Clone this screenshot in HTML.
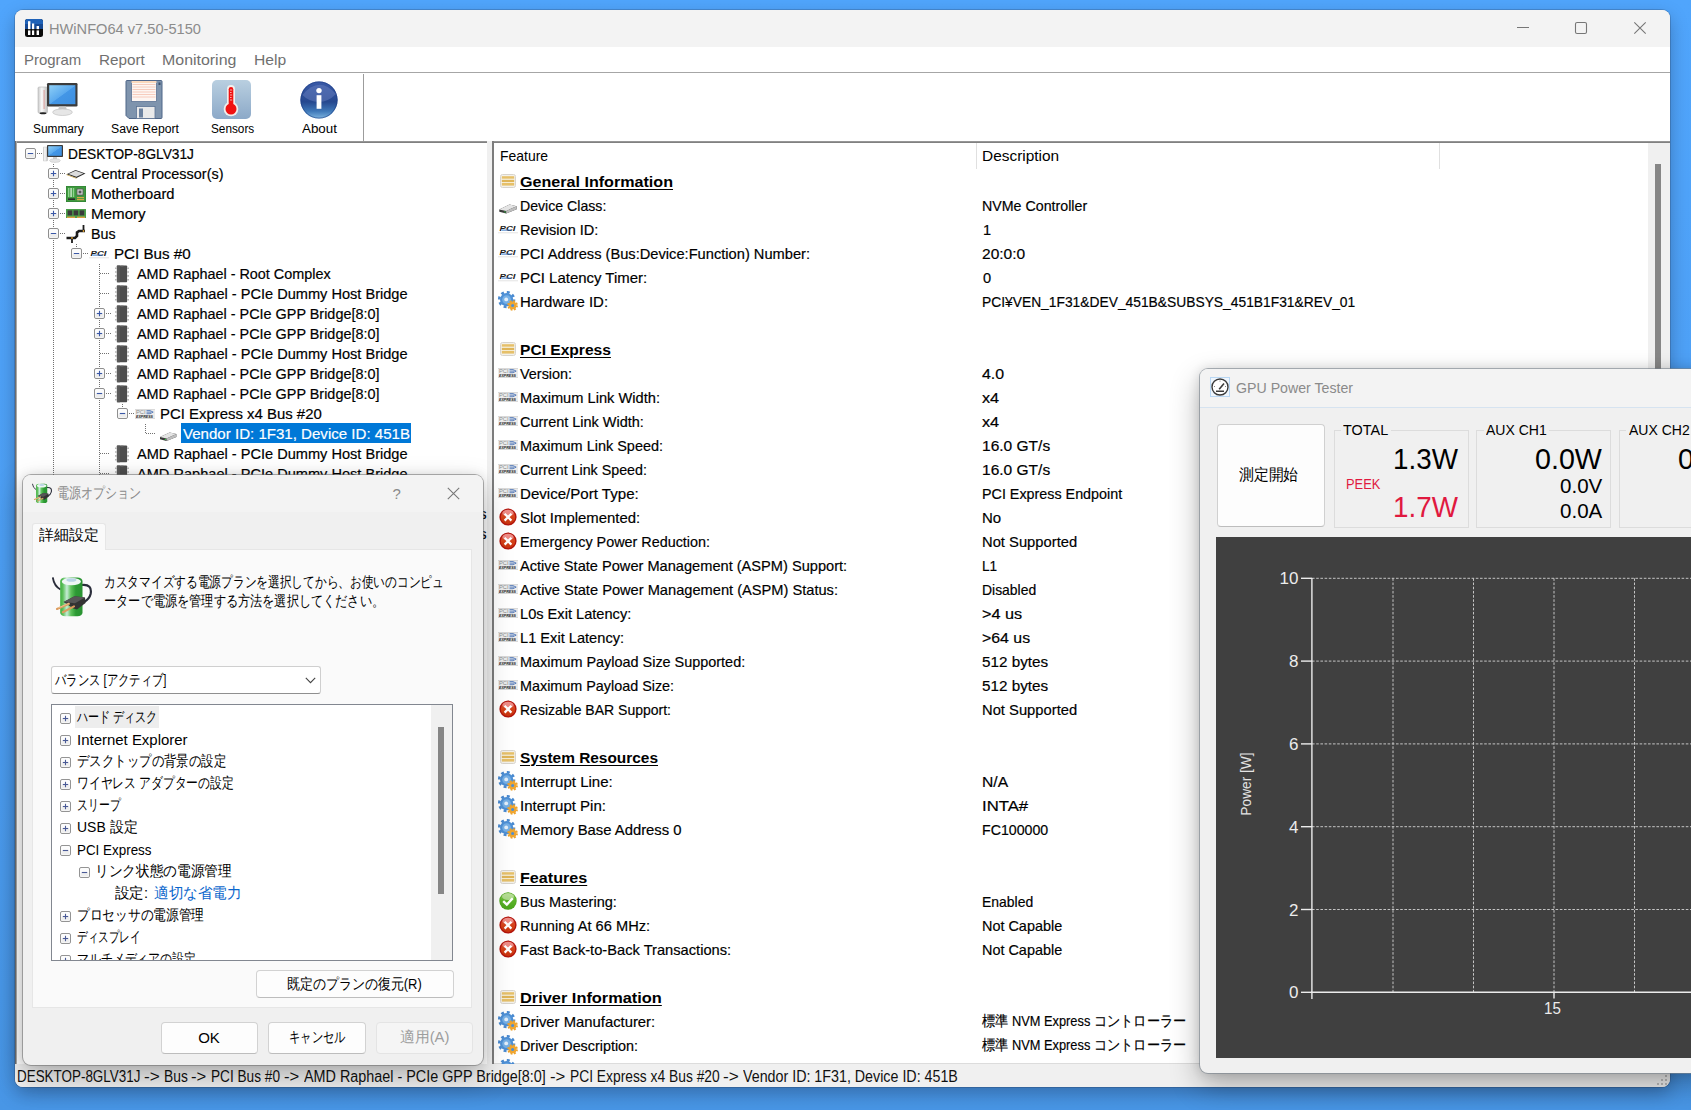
<!DOCTYPE html><html><head><meta charset="utf-8"><title>HWiNFO64</title><style>
html,body{margin:0;padding:0}
body{width:1691px;height:1110px;overflow:hidden;position:relative;background:linear-gradient(180deg,#50a5fc 0%,#4d9ff4 50%,#4896e6 100%);font-family:"Liberation Sans", sans-serif;}
div,svg{position:absolute;box-sizing:border-box}
.t{white-space:pre;}
.k{-webkit-text-stroke:.18px currentColor}
</style></head><body>
<svg width="0" height="0" style="position:absolute"><defs>
<linearGradient id="gScr" x1="0" y1="0" x2="1" y2="1"><stop offset="0" stop-color="#8fd0f7"/><stop offset=".5" stop-color="#5aa9ee"/><stop offset=".52" stop-color="#4396e6"/><stop offset="1" stop-color="#3d8fe0"/></linearGradient>
<linearGradient id="gTow" x1="0" y1="0" x2="1" y2="0"><stop offset="0" stop-color="#c9c9c9"/><stop offset=".4" stop-color="#fafafa"/><stop offset="1" stop-color="#bdbdbd"/></linearGradient>
<linearGradient id="gRed" x1="0" y1="0" x2="0" y2="1"><stop offset="0" stop-color="#e2574a"/><stop offset=".5" stop-color="#d6441a"/><stop offset="1" stop-color="#c8330f"/></linearGradient>
<linearGradient id="gGrn" x1="0" y1="0" x2="0" y2="1"><stop offset="0" stop-color="#9ad06a"/><stop offset=".45" stop-color="#5db52a"/><stop offset="1" stop-color="#4aa51c"/></linearGradient>
<linearGradient id="gAbt" x1="0" y1="0" x2="0" y2="1"><stop offset="0" stop-color="#3a5aa8"/><stop offset=".55" stop-color="#26488f"/><stop offset=".8" stop-color="#3f78b8"/><stop offset="1" stop-color="#7fb6e0"/></linearGradient>
<linearGradient id="gSen" x1="0" y1="0" x2="0" y2="1"><stop offset="0" stop-color="#b9cfe0"/><stop offset="1" stop-color="#8ca9c8"/></linearGradient>
<linearGradient id="gDrv" x1="0" y1="0" x2="1" y2="0"><stop offset="0" stop-color="#e8e8e8"/><stop offset="1" stop-color="#bcbcbc"/></linearGradient>
<linearGradient id="gBat2" x1="0" y1="0" x2="1" y2="0"><stop offset="0" stop-color="#3fae3f"/><stop offset=".12" stop-color="#5cc05a"/><stop offset=".3" stop-color="#c6ecd6"/><stop offset=".48" stop-color="#5fc35c"/><stop offset=".7" stop-color="#2c9a34"/><stop offset="1" stop-color="#2a9232"/></linearGradient>
<linearGradient id="gBat" x1="0" y1="0" x2="1" y2="0"><stop offset="0" stop-color="#3f9a35"/><stop offset=".4" stop-color="#8fdc78"/><stop offset="1" stop-color="#2f8a2a"/></linearGradient>

<symbol id="i-x" viewBox="0 0 18 18"><circle cx="9" cy="9" r="8.6" fill="#b3150c"/><circle cx="9" cy="9" r="7.2" fill="url(#gRed)"/><ellipse cx="9" cy="5" rx="5.6" ry="3.2" fill="#f3a0a0" opacity=".75"/><path d="M5.6 5.8 L12.4 12.6 M12.4 5.8 L5.6 12.6" stroke="#fff" stroke-width="2.3" stroke-linecap="butt"/></symbol>
<symbol id="i-ok" viewBox="0 0 18 18"><circle cx="9" cy="9" r="8.7" fill="#4ea51f"/><circle cx="9" cy="9" r="8" fill="url(#gGrn)"/><ellipse cx="9" cy="4.6" rx="6" ry="3.4" fill="#c7e6ae" opacity=".7"/><path d="M4.2 9.2 L7.8 12.6 L13.8 6.2" stroke="#fff" stroke-width="2.4" fill="none"/></symbol>
<symbol id="i-gear" viewBox="0 0 20 20"><circle cx="8.6" cy="8.6" r="7.4" fill="none" stroke="#4a8ad0" stroke-width="2.6" stroke-dasharray="2.9 2.91"/><circle cx="8.6" cy="8.6" r="6.6" fill="#4e90d6"/><circle cx="8.6" cy="8.6" r="4.4" fill="#76b0e6"/><circle cx="8.2" cy="8.4" r="1.9" fill="#e4effa"/><circle cx="14.6" cy="14.4" r="4.4" fill="none" stroke="#eea22c" stroke-width="1.8" stroke-dasharray="1.9 1.56"/><circle cx="14.6" cy="14.4" r="3.9" fill="#f0a630"/><circle cx="14.6" cy="14.4" r="1.5" fill="#4e90d6"/></symbol>
<symbol id="i-list" viewBox="0 0 16 14"><rect x=".5" y=".5" width="15" height="13" rx="2" fill="#f3f1ec" stroke="#d8d4cc"/><rect x="1.8" y="2.2" width="12.4" height="2.6" fill="#e6c069"/><rect x="1.8" y="5.7" width="12.4" height="2.4" fill="#dfb558"/><rect x="1.8" y="9" width="12.4" height="2.6" fill="#e6c069"/><rect x="1.8" y="4.8" width="12.4" height=".9" fill="#f6ecd0"/><rect x="1.8" y="8.1" width="12.4" height=".9" fill="#f6ecd0"/></symbol>
<symbol id="i-drive" viewBox="0 0 18 10"><path d="M0.3 5.4 L10.5 0.6 L17.7 2.2 L17.7 5.2 L7.2 9.6 L0.3 7.8 Z" fill="#3a3a3a"/><path d="M0.3 5.4 L10.5 0.6 L17.7 2.2 L7.2 6.9 Z" fill="#e4e4e4"/><path d="M7.2 6.9 L17.7 2.2 L17.7 5.2 L7.2 9.6 Z" fill="#bdbdbd"/><circle cx="6" cy="7.9" r=".7" fill="#35d048"/></symbol>
<symbol id="i-pci" viewBox="0 0 20 10"><rect x="0" y="8.3" width="20" height="1" fill="#e3e3e3"/><text x="1.5" y="7" font-family="Liberation Sans, sans-serif" font-size="7.5" font-weight="700" font-style="italic" fill="#1c1c1c" textLength="16" lengthAdjust="spacingAndGlyphs">PCI</text><rect x="4" y="5.6" width="9" height="1" fill="#3a78c8"/></symbol>
<symbol id="i-pcie" viewBox="0 0 20 10"><rect x="0" y="0" width="20" height="10" fill="#ececec"/><rect x="0" y="0" width="20" height=".7" fill="#d2d2d2"/><rect x="0" y="9.3" width="20" height=".7" fill="#d2d2d2"/><text x="1" y="5" font-family="Liberation Sans, sans-serif" font-size="5.2" fill="#8a8a8a" textLength="9.5" lengthAdjust="spacingAndGlyphs">PCI</text><path d="M11.5 1.6 H15 L18.2 3.1 L15 4.7 H11.5 M11.5 3.15 H16" stroke="#3b67b0" stroke-width=".8" fill="none"/><text x="1" y="8.7" font-family="Liberation Sans, sans-serif" font-size="3.9" font-weight="700" font-style="italic" fill="#222" textLength="17" lengthAdjust="spacingAndGlyphs">EXPRESS</text></symbol>
<symbol id="i-chip" viewBox="0 0 18 20"><rect x="4.9" y="1.5" width="10.2" height="16.8" rx=".8" fill="#4d4d4d"/><rect x="4.9" y="1.5" width="3" height="16.8" fill="#5a5a5a"/><path d="M8.5 1.5 h3 v.9 h-3z" fill="#777"/><path d="M3 4.2h1.9M3 8h1.9M3 11.9h1.9M3 15.7h1.9M15.1 4.2h1.9M15.1 8h1.9M15.1 11.9h1.9M15.1 15.7h1.9" stroke="#b8b8b8" stroke-width="1.6"/></symbol>
<symbol id="i-pc" viewBox="0 0 20 18"><rect x="0" y="2" width="4.6" height="14" rx=".8" fill="url(#gTow)" stroke="#bdbdbd" stroke-width=".4"/><rect x="4" y="0" width="16" height="12" rx=".8" fill="#3a3a3a"/><rect x="5.2" y="1.2" width="13.6" height="9.6" fill="url(#gScr)"/><rect x="10" y="12" width="4" height="2.2" fill="#cfcfcf"/><ellipse cx="12" cy="15.6" rx="5.4" ry="1.9" fill="#e4e4e4" stroke="#b8b8b8" stroke-width=".4"/></symbol>
<symbol id="i-cpu" viewBox="0 0 20 10"><path d="M0.5 5.2 L9.5 1 L19.5 4.6 L10.5 9 Z" fill="#2e2e2e"/><path d="M2.5 5 L9.6 1.8 L17.4 4.6 L10.4 7.8 Z" fill="#dcdcdc"/><path d="M0.5 5.2 L10.5 9 L10.5 9.8 L0.5 6 Z" fill="#c9a44a"/></symbol>
<symbol id="i-mb" viewBox="0 0 20 16"><rect x="0" y="0" width="20" height="16" fill="#3f9a3f"/><rect x="0" y="0" width="20" height="16" fill="none" stroke="#2c7a30" stroke-width="1"/><rect x="11" y="3" width="6" height="6" fill="#d8d8d8" stroke="#555" stroke-width=".8"/><rect x="12.6" y="4.6" width="2.8" height="2.8" fill="#555"/><rect x="2" y="2" width="1.4" height="9" fill="#8fd48f"/><rect x="4.4" y="2" width="1.4" height="9" fill="#cfeacf"/><rect x="6.8" y="2" width="1.4" height="9" fill="#8fd48f"/><rect x="2" y="12.4" width="7" height="1.6" fill="#2a2a2a"/><rect x="11" y="11" width="7" height="1.2" fill="#d9a648"/><rect x="11" y="13" width="7" height="1.2" fill="#d9a648"/></symbol>
<symbol id="i-mem" viewBox="0 0 20 10"><rect x="0" y="0" width="20" height="9" fill="#4aa04a"/><rect x="1.6" y="1.4" width="4.6" height="5" fill="#3a3a3a"/><rect x="7.6" y="1.4" width="4.6" height="5" fill="#3a3a3a"/><rect x="13.6" y="1.4" width="4.6" height="5" fill="#3a3a3a"/><rect x="1" y="7.6" width="8" height="1.4" fill="#d9a040"/><rect x="11" y="7.6" width="8" height="1.4" fill="#d9a040"/></symbol>
<symbol id="i-bus" viewBox="0 0 20 20"><path d="M0.5 14 H9 L11 12 V8.5 L13 7 H19" stroke="#1c1c1c" stroke-width="2.6" fill="none"/><path d="M17.5 1 V7.5 M6 14 V19" stroke="#1c1c1c" stroke-width="1.8" fill="none"/><circle cx="6" cy="14" r=".9" fill="#e0a030"/><circle cx="17.5" cy="7" r=".9" fill="#e0a030"/></symbol>
</defs></svg>
<div style="left:15px;top:10px;width:1655px;height:1077px;border-radius:8px;overflow:hidden;background:#f0f0f0;box-shadow:0 7px 18px rgba(0,0,20,.27),0 0 0 1px rgba(50,80,120,.3);"><div style="left:0px;top:0px;width:1655px;height:37px;background:#f3f3f3"></div><svg style="left:10px;top:9px;" width="18" height="18" viewBox="0 0 18 18"><rect x="0" y="0" width="18" height="18" rx="2.5" fill="#0a0a0a"/><rect x="0" y="0" width="18" height="9" rx="2.5" fill="#1f62b8"/><rect x="0" y="5" width="18" height="5" fill="#174a94"/><rect x="3" y="2.2" width="2.4" height="8" fill="#fff"/><rect x="7" y="4.5" width="2.2" height="5.7" fill="#fff"/><rect x="11.6" y="7" width="2.4" height="3.2" fill="#fff"/><rect x="3" y="11.4" width="2.4" height="4.6" fill="#fff"/><rect x="7" y="11.4" width="2.2" height="4.6" fill="#fff"/><rect x="11.6" y="11.4" width="2.4" height="4.6" fill="#fff"/></svg><div class="t" style="left:33.77px;top:9.8px;font-size:15px;line-height:17px;color:#8c8c8c;transform:scaleX(0.9743);transform-origin:0 0;">HWiNFO64 v7.50-5150</div><svg style="left:1495px;top:8px;" width="150" height="20" viewBox="0 0 150 20"><path d="M7 9.5 H19" stroke="#767676" stroke-width="1.1" fill="none"/><rect x="65.5" y="4.5" width="11" height="11" rx="1.6" stroke="#767676" stroke-width="1.1" fill="none"/><path d="M124.3 4.3 L135.7 15.7 M135.7 4.3 L124.3 15.7" stroke="#767676" stroke-width="1.1" fill="none"/></svg><div style="left:0px;top:37px;width:1655px;height:94px;background:#fff"></div><div class="t" style="left:8.78px;top:40.6px;font-size:15px;line-height:17px;color:#707070;transform:scaleX(0.996);transform-origin:0 0;">Program</div><div class="t" style="left:83.77px;top:40.6px;font-size:15px;line-height:17px;color:#707070;transform:scaleX(1.0171);transform-origin:0 0;">Report</div><div class="t" style="left:146.67px;top:40.6px;font-size:15px;line-height:17px;color:#707070;transform:scaleX(1.0621);transform-origin:0 0;">Monitoring</div><div class="t" style="left:238.78px;top:40.6px;font-size:15px;line-height:17px;color:#707070;transform:scaleX(1.0434);transform-origin:0 0;">Help</div><div style="left:0px;top:62px;width:1655px;height:1px;background:#a6a6a6"></div><div style="left:348px;top:64px;width:1px;height:67px;background:#9c9c9c"></div><svg style="left:22px;top:72px;" width="42" height="36" viewBox="0 0 42 36"><rect x="1" y="5" width="9.5" height="26" rx="1.2" fill="url(#gTow)" stroke="#b5b5b5" stroke-width=".6"/><rect x="6.7" y="8" width=".7" height="19" fill="#d8605a" opacity=".75"/><ellipse cx="6" cy="31.2" rx="3.4" ry="1" fill="#222"/><rect x="10" y="1" width="30.5" height="23.5" rx="1.2" fill="#3b3b3b"/><rect x="12.2" y="3.2" width="26.2" height="19" fill="url(#gScr)"/><path d="M22 24.5 h7 l1 4 h-9z" fill="#c9c9c9"/><ellipse cx="25.5" cy="30.2" rx="9.8" ry="3.3" fill="#e6e6e6" stroke="#b9b9b9" stroke-width=".6"/></svg><div class="t" style="left:17.58px;top:111.8px;font-size:12px;line-height:14px;color:#000;transform:scaleX(0.9886);transform-origin:0 0;">Summary</div><svg style="left:110px;top:70px;" width="38" height="39" viewBox="0 0 38 39"><path d="M1 1.5 Q1 .5 2 .5 H36 Q37 .5 37 1.5 V37.5 Q37 38.5 36 38.5 H4 L1 35.5 Z" fill="#7f94ad" stroke="#4f6688" stroke-width="1"/><rect x="6.5" y="1" width="25" height="20.5" fill="#fdf6f2" stroke="#5c7394" stroke-width=".8"/><path d="M7.5 4.5h23M7.5 7h23M7.5 9.5h23M7.5 12h23M7.5 14.5h23M7.5 17h23" stroke="#f5c2ae" stroke-width=".8"/><rect x="6.5" y="1" width="25" height="2" fill="#fbd9bd"/><rect x="11.5" y="26.5" width="18.5" height="12" fill="#eaeaea" stroke="#5c7394" stroke-width=".8"/><rect x="14" y="28.5" width="4" height="9" fill="#6c829f"/><rect x="33.5" y="2.5" width="2" height="2.5" fill="#3e5270"/></svg><div class="t" style="left:95.58px;top:111.8px;font-size:12px;line-height:14px;color:#000;transform:scaleX(1.0188);transform-origin:0 0;">Save Report</div><svg style="left:197px;top:70px;" width="39" height="39" viewBox="0 0 39 39"><rect x="0" y="0" width="39" height="39" rx="5" fill="url(#gSen)"/><rect x="15" y="5" width="8" height="24" rx="4" fill="#f1efec"/><circle cx="19" cy="29" r="7.3" fill="#f1efec"/><rect x="16.7" y="7" width="4.6" height="22" rx="2.3" fill="#f01010"/><circle cx="19" cy="29" r="5.5" fill="#f01010"/><path d="M18 10h2.2M18 12.5h1.6M18 15h2.2M18 17.5h1.6M18 20h2.2" stroke="#fbd0d0" stroke-width=".8"/></svg><div class="t" style="left:195.58px;top:111.8px;font-size:12px;line-height:14px;color:#000;transform:scaleX(0.9825);transform-origin:0 0;">Sensors</div><svg style="left:285px;top:71px;" width="38" height="38" viewBox="0 0 38 38"><circle cx="19" cy="19" r="18.6" fill="url(#gAbt)"/><circle cx="19" cy="19" r="18.1" fill="none" stroke="#1f3f86" stroke-width="1" opacity=".6"/><path d="M2.5 14 Q19 -6 36 13 Q28 21 19 21 Q9 21 2.5 14Z" fill="#6f86c4" opacity=".45"/><circle cx="19" cy="9.6" r="2.7" fill="#fff"/><rect x="16.6" y="14.2" width="4.8" height="13.6" fill="#fff"/></svg><div class="t" style="left:286.98px;top:111.8px;font-size:12px;line-height:14px;color:#000;transform:scaleX(1.1148);transform-origin:0 0;">About</div><div style="left:0px;top:131px;width:472px;height:923px;background:#fff"></div><div style="left:0px;top:131px;width:472px;height:2px;background:linear-gradient(#a0a0a0,#767676)"></div><div style="left:0px;top:131px;width:1px;height:923px;background:#6e6e6e"></div><div style="left:1px;top:131px;width:1px;height:923px;background:#a8a8a8"></div><div style="left:472px;top:131px;width:5px;height:923px;background:#f0f0f0"></div><div style="left:38px;top:154px;width:1px;height:900px;background:repeating-linear-gradient(180deg,#707070 0,#707070 1px,transparent 1px,transparent 2px)"></div><div style="left:61px;top:234px;width:1px;height:5px;background:repeating-linear-gradient(180deg,#707070 0,#707070 1px,transparent 1px,transparent 2px)"></div><div style="left:84px;top:254px;width:1px;height:800px;background:repeating-linear-gradient(180deg,#707070 0,#707070 1px,transparent 1px,transparent 2px)"></div><div style="left:107px;top:394px;width:1px;height:5px;background:repeating-linear-gradient(180deg,#707070 0,#707070 1px,transparent 1px,transparent 2px)"></div><div style="left:130px;top:414px;width:1px;height:10px;background:repeating-linear-gradient(180deg,#707070 0,#707070 1px,transparent 1px,transparent 2px)"></div><div style="left:21.5px;top:143px;width:5.5px;height:1px;background:repeating-linear-gradient(90deg,#707070 0,#707070 1px,transparent 1px,transparent 2px)"></div><svg style="left:10px;top:138px;" width="11" height="11" viewBox="0 0 11 11"><rect x=".5" y=".5" width="10" height="10" rx="1.5" fill="#fbfbfb" stroke="#8f8f8f"/><rect x="1.5" y="6" width="8" height="3.5" fill="#ececec"/><path d="M2.8 5.5 H8.2" stroke="#3a57a6" stroke-width="1.1"/></svg><svg style="left:28px;top:134.5px" width="20" height="18"><use href="#i-pc"/></svg><div class="t k" style="left:52.69px;top:135.7px;font-size:14.7px;line-height:16px;color:#000;transform:scaleX(0.9334);transform-origin:0 0;">DESKTOP-8GLV31J</div><div style="left:44.5px;top:163px;width:5.5px;height:1px;background:repeating-linear-gradient(90deg,#707070 0,#707070 1px,transparent 1px,transparent 2px)"></div><svg style="left:33px;top:158px;" width="11" height="11" viewBox="0 0 11 11"><rect x=".5" y=".5" width="10" height="10" rx="1.5" fill="#fbfbfb" stroke="#8f8f8f"/><rect x="1.5" y="6" width="8" height="3.5" fill="#ececec"/><path d="M2.8 5.5 H8.2" stroke="#3a57a6" stroke-width="1.1"/><path d="M5.5 2.8 V8.2" stroke="#3a57a6" stroke-width="1.1"/></svg><svg style="left:51px;top:158.5px" width="20" height="10"><use href="#i-cpu"/></svg><div class="t k" style="left:75.69px;top:155.7px;font-size:14.7px;line-height:16px;color:#000;transform:scaleX(0.9837);transform-origin:0 0;">Central Processor(s)</div><div style="left:44.5px;top:183px;width:5.5px;height:1px;background:repeating-linear-gradient(90deg,#707070 0,#707070 1px,transparent 1px,transparent 2px)"></div><svg style="left:33px;top:178px;" width="11" height="11" viewBox="0 0 11 11"><rect x=".5" y=".5" width="10" height="10" rx="1.5" fill="#fbfbfb" stroke="#8f8f8f"/><rect x="1.5" y="6" width="8" height="3.5" fill="#ececec"/><path d="M2.8 5.5 H8.2" stroke="#3a57a6" stroke-width="1.1"/><path d="M5.5 2.8 V8.2" stroke="#3a57a6" stroke-width="1.1"/></svg><svg style="left:51px;top:175.5px" width="20" height="16"><use href="#i-mb"/></svg><div class="t k" style="left:75.69px;top:175.7px;font-size:14.7px;line-height:16px;color:#000;transform:scaleX(1.0023);transform-origin:0 0;">Motherboard</div><div style="left:44.5px;top:203px;width:5.5px;height:1px;background:repeating-linear-gradient(90deg,#707070 0,#707070 1px,transparent 1px,transparent 2px)"></div><svg style="left:33px;top:198px;" width="11" height="11" viewBox="0 0 11 11"><rect x=".5" y=".5" width="10" height="10" rx="1.5" fill="#fbfbfb" stroke="#8f8f8f"/><rect x="1.5" y="6" width="8" height="3.5" fill="#ececec"/><path d="M2.8 5.5 H8.2" stroke="#3a57a6" stroke-width="1.1"/><path d="M5.5 2.8 V8.2" stroke="#3a57a6" stroke-width="1.1"/></svg><svg style="left:51px;top:198.5px" width="20" height="10"><use href="#i-mem"/></svg><div class="t k" style="left:75.69px;top:195.7px;font-size:14.7px;line-height:16px;color:#000;transform:scaleX(1.0307);transform-origin:0 0;">Memory</div><div style="left:44.5px;top:223px;width:5.5px;height:1px;background:repeating-linear-gradient(90deg,#707070 0,#707070 1px,transparent 1px,transparent 2px)"></div><svg style="left:33px;top:218px;" width="11" height="11" viewBox="0 0 11 11"><rect x=".5" y=".5" width="10" height="10" rx="1.5" fill="#fbfbfb" stroke="#8f8f8f"/><rect x="1.5" y="6" width="8" height="3.5" fill="#ececec"/><path d="M2.8 5.5 H8.2" stroke="#3a57a6" stroke-width="1.1"/></svg><svg style="left:51px;top:213.5px" width="20" height="20"><use href="#i-bus"/></svg><div class="t k" style="left:75.69px;top:215.7px;font-size:14.7px;line-height:16px;color:#000;transform:scaleX(0.9709);transform-origin:0 0;">Bus</div><div style="left:67.5px;top:243px;width:5.5px;height:1px;background:repeating-linear-gradient(90deg,#707070 0,#707070 1px,transparent 1px,transparent 2px)"></div><svg style="left:56px;top:238px;" width="11" height="11" viewBox="0 0 11 11"><rect x=".5" y=".5" width="10" height="10" rx="1.5" fill="#fbfbfb" stroke="#8f8f8f"/><rect x="1.5" y="6" width="8" height="3.5" fill="#ececec"/><path d="M2.8 5.5 H8.2" stroke="#3a57a6" stroke-width="1.1"/></svg><svg style="left:74px;top:238.5px" width="20" height="10"><use href="#i-pci"/></svg><div class="t k" style="left:98.69px;top:235.7px;font-size:14.7px;line-height:16px;color:#000;transform:scaleX(1.032);transform-origin:0 0;">PCI Bus #0</div><div style="left:84.5px;top:263px;width:10.5px;height:1px;background:repeating-linear-gradient(90deg,#707070 0,#707070 1px,transparent 1px,transparent 2px)"></div><svg style="left:97px;top:253.5px" width="18" height="20"><use href="#i-chip"/></svg><div class="t k" style="left:121.69px;top:255.7px;font-size:14.7px;line-height:16px;color:#000;transform:scaleX(0.9804);transform-origin:0 0;">AMD Raphael - Root Complex</div><div style="left:84.5px;top:283px;width:10.5px;height:1px;background:repeating-linear-gradient(90deg,#707070 0,#707070 1px,transparent 1px,transparent 2px)"></div><svg style="left:97px;top:273.5px" width="18" height="20"><use href="#i-chip"/></svg><div class="t k" style="left:121.69px;top:275.7px;font-size:14.7px;line-height:16px;color:#000;transform:scaleX(0.9925);transform-origin:0 0;">AMD Raphael - PCIe Dummy Host Bridge</div><div style="left:90.5px;top:303px;width:5.5px;height:1px;background:repeating-linear-gradient(90deg,#707070 0,#707070 1px,transparent 1px,transparent 2px)"></div><svg style="left:79px;top:298px;" width="11" height="11" viewBox="0 0 11 11"><rect x=".5" y=".5" width="10" height="10" rx="1.5" fill="#fbfbfb" stroke="#8f8f8f"/><rect x="1.5" y="6" width="8" height="3.5" fill="#ececec"/><path d="M2.8 5.5 H8.2" stroke="#3a57a6" stroke-width="1.1"/><path d="M5.5 2.8 V8.2" stroke="#3a57a6" stroke-width="1.1"/></svg><svg style="left:97px;top:293.5px" width="18" height="20"><use href="#i-chip"/></svg><div class="t k" style="left:121.69px;top:295.7px;font-size:14.7px;line-height:16px;color:#000;transform:scaleX(0.9813);transform-origin:0 0;">AMD Raphael - PCIe GPP Bridge[8:0]</div><div style="left:90.5px;top:323px;width:5.5px;height:1px;background:repeating-linear-gradient(90deg,#707070 0,#707070 1px,transparent 1px,transparent 2px)"></div><svg style="left:79px;top:318px;" width="11" height="11" viewBox="0 0 11 11"><rect x=".5" y=".5" width="10" height="10" rx="1.5" fill="#fbfbfb" stroke="#8f8f8f"/><rect x="1.5" y="6" width="8" height="3.5" fill="#ececec"/><path d="M2.8 5.5 H8.2" stroke="#3a57a6" stroke-width="1.1"/><path d="M5.5 2.8 V8.2" stroke="#3a57a6" stroke-width="1.1"/></svg><svg style="left:97px;top:313.5px" width="18" height="20"><use href="#i-chip"/></svg><div class="t k" style="left:121.69px;top:315.7px;font-size:14.7px;line-height:16px;color:#000;transform:scaleX(0.9813);transform-origin:0 0;">AMD Raphael - PCIe GPP Bridge[8:0]</div><div style="left:84.5px;top:343px;width:10.5px;height:1px;background:repeating-linear-gradient(90deg,#707070 0,#707070 1px,transparent 1px,transparent 2px)"></div><svg style="left:97px;top:333.5px" width="18" height="20"><use href="#i-chip"/></svg><div class="t k" style="left:121.69px;top:335.7px;font-size:14.7px;line-height:16px;color:#000;transform:scaleX(0.9925);transform-origin:0 0;">AMD Raphael - PCIe Dummy Host Bridge</div><div style="left:90.5px;top:363px;width:5.5px;height:1px;background:repeating-linear-gradient(90deg,#707070 0,#707070 1px,transparent 1px,transparent 2px)"></div><svg style="left:79px;top:358px;" width="11" height="11" viewBox="0 0 11 11"><rect x=".5" y=".5" width="10" height="10" rx="1.5" fill="#fbfbfb" stroke="#8f8f8f"/><rect x="1.5" y="6" width="8" height="3.5" fill="#ececec"/><path d="M2.8 5.5 H8.2" stroke="#3a57a6" stroke-width="1.1"/><path d="M5.5 2.8 V8.2" stroke="#3a57a6" stroke-width="1.1"/></svg><svg style="left:97px;top:353.5px" width="18" height="20"><use href="#i-chip"/></svg><div class="t k" style="left:121.69px;top:355.7px;font-size:14.7px;line-height:16px;color:#000;transform:scaleX(0.9813);transform-origin:0 0;">AMD Raphael - PCIe GPP Bridge[8:0]</div><div style="left:90.5px;top:383px;width:5.5px;height:1px;background:repeating-linear-gradient(90deg,#707070 0,#707070 1px,transparent 1px,transparent 2px)"></div><svg style="left:79px;top:378px;" width="11" height="11" viewBox="0 0 11 11"><rect x=".5" y=".5" width="10" height="10" rx="1.5" fill="#fbfbfb" stroke="#8f8f8f"/><rect x="1.5" y="6" width="8" height="3.5" fill="#ececec"/><path d="M2.8 5.5 H8.2" stroke="#3a57a6" stroke-width="1.1"/></svg><svg style="left:97px;top:373.5px" width="18" height="20"><use href="#i-chip"/></svg><div class="t k" style="left:121.69px;top:375.7px;font-size:14.7px;line-height:16px;color:#000;transform:scaleX(0.9813);transform-origin:0 0;">AMD Raphael - PCIe GPP Bridge[8:0]</div><div style="left:113.5px;top:403px;width:5.5px;height:1px;background:repeating-linear-gradient(90deg,#707070 0,#707070 1px,transparent 1px,transparent 2px)"></div><svg style="left:102px;top:398px;" width="11" height="11" viewBox="0 0 11 11"><rect x=".5" y=".5" width="10" height="10" rx="1.5" fill="#fbfbfb" stroke="#8f8f8f"/><rect x="1.5" y="6" width="8" height="3.5" fill="#ececec"/><path d="M2.8 5.5 H8.2" stroke="#3a57a6" stroke-width="1.1"/></svg><svg style="left:120px;top:398.5px" width="20" height="10"><use href="#i-pcie"/></svg><div class="t k" style="left:144.69px;top:395.7px;font-size:14.7px;line-height:16px;color:#000;transform:scaleX(1.0162);transform-origin:0 0;">PCI Express x4 Bus #20</div><div style="left:166px;top:413px;width:230px;height:19.5px;background:#0078d7"></div><div style="left:130.5px;top:423px;width:10.5px;height:1px;background:repeating-linear-gradient(90deg,#707070 0,#707070 1px,transparent 1px,transparent 2px)"></div><svg style="left:143.8px;top:422.3px" width="18.4" height="9.4"><use href="#i-drive"/></svg><div class="t k" style="left:167.69px;top:415.7px;font-size:14.7px;line-height:16px;color:#fff;transform:scaleX(1.0259);transform-origin:0 0;">Vendor ID: 1F31, Device ID: 451B</div><div style="left:84.5px;top:443px;width:10.5px;height:1px;background:repeating-linear-gradient(90deg,#707070 0,#707070 1px,transparent 1px,transparent 2px)"></div><svg style="left:97px;top:433.5px" width="18" height="20"><use href="#i-chip"/></svg><div class="t k" style="left:121.69px;top:435.7px;font-size:14.7px;line-height:16px;color:#000;transform:scaleX(0.9925);transform-origin:0 0;">AMD Raphael - PCIe Dummy Host Bridge</div><div style="left:84.5px;top:463px;width:10.5px;height:1px;background:repeating-linear-gradient(90deg,#707070 0,#707070 1px,transparent 1px,transparent 2px)"></div><svg style="left:97px;top:453.5px" width="18" height="20"><use href="#i-chip"/></svg><div class="t k" style="left:121.69px;top:455.7px;font-size:14.7px;line-height:16px;color:#000;transform:scaleX(0.9925);transform-origin:0 0;">AMD Raphael - PCIe Dummy Host Bridge</div><div style="left:84.5px;top:483px;width:10.5px;height:1px;background:repeating-linear-gradient(90deg,#707070 0,#707070 1px,transparent 1px,transparent 2px)"></div><svg style="left:97px;top:473.5px" width="18" height="20"><use href="#i-chip"/></svg><div class="t k" style="left:121.69px;top:475.7px;font-size:14.7px;line-height:16px;color:#000;transform:scaleX(0.9925);transform-origin:0 0;">AMD Raphael - PCIe Dummy Host Bridge</div><div class="t k" style="left:464.3px;top:495.7px;font-size:14.7px;line-height:16px;color:#000;">s</div><div class="t k" style="left:464.3px;top:515.7px;font-size:14.7px;line-height:16px;color:#000;">s</div><div style="left:472px;top:464px;width:5px;height:126px;background:#f0f0f0"></div><div style="left:477px;top:131px;width:1178px;height:923px;background:#fff"></div><div style="left:477px;top:131px;width:1178px;height:2px;background:linear-gradient(#a0a0a0,#767676)"></div><div style="left:477px;top:131px;width:2px;height:923px;background:#7c7c7c"></div><div style="left:961px;top:133px;width:1px;height:26px;background:#e0e0e0"></div><div style="left:1424px;top:133px;width:1px;height:26px;background:#e0e0e0"></div><div class="t" style="left:484.99px;top:138.4px;font-size:14.6px;line-height:16px;color:#000;transform:scaleX(0.9557);transform-origin:0 0;">Feature</div><div class="t" style="left:967.49px;top:138.4px;font-size:14.6px;line-height:16px;color:#000;transform:scaleX(1.0571);transform-origin:0 0;">Description</div><div style="left:1633px;top:133px;width:22px;height:921px;background:#f0f0f0"></div><div style="left:1640px;top:154px;width:6px;height:596px;background:#868686"></div><div style="left:479px;top:1053px;width:1176px;height:1px;background:#dcdcdc"></div><svg style="left:485px;top:164px" width="16" height="14"><use href="#i-list"/></svg><div class="t" style="left:504.51px;top:163.5px;font-size:14px;line-height:16px;color:#000;font-weight:700;transform:scaleX(1.1503);transform-origin:0 0;text-decoration:underline;text-decoration-thickness:1px;text-underline-offset:2px;">General Information</div><svg style="left:484px;top:194.3px" width="18" height="10"><use href="#i-drive"/></svg><div class="t k" style="left:504.99px;top:188px;font-size:14.6px;line-height:16px;color:#000;transform:scaleX(0.968);transform-origin:0 0;">Device Class:</div><div class="t k" style="left:967.49px;top:188px;font-size:14.6px;line-height:16px;color:#000;transform:scaleX(0.9749);transform-origin:0 0;">NVMe Controller</div><svg style="left:483px;top:214px" width="20" height="10"><use href="#i-pci"/></svg><div class="t k" style="left:504.99px;top:212px;font-size:14.6px;line-height:16px;color:#000;transform:scaleX(0.9961);transform-origin:0 0;">Revision ID:</div><div class="t k" style="left:968px;top:212px;font-size:14.6px;line-height:16px;color:#000;">1</div><svg style="left:483px;top:238px" width="20" height="10"><use href="#i-pci"/></svg><div class="t k" style="left:504.99px;top:236px;font-size:14.6px;line-height:16px;color:#000;transform:scaleX(1.0046);transform-origin:0 0;">PCI Address (Bus:Device:Function) Number:</div><div class="t k" style="left:967.49px;top:236px;font-size:14.6px;line-height:16px;color:#000;transform:scaleX(1.0638);transform-origin:0 0;">20:0:0</div><svg style="left:483px;top:262px" width="20" height="10"><use href="#i-pci"/></svg><div class="t k" style="left:504.99px;top:260px;font-size:14.6px;line-height:16px;color:#000;transform:scaleX(1.0248);transform-origin:0 0;">PCI Latency Timer:</div><div class="t k" style="left:968px;top:260px;font-size:14.6px;line-height:16px;color:#000;">0</div><svg style="left:483px;top:281px" width="20" height="20"><use href="#i-gear"/></svg><div class="t k" style="left:504.99px;top:284px;font-size:14.6px;line-height:16px;color:#000;transform:scaleX(1.0244);transform-origin:0 0;">Hardware ID:</div><div class="t k" style="left:967.49px;top:284px;font-size:14.6px;line-height:16px;color:#000;transform:scaleX(0.9465);transform-origin:0 0;">PCI¥VEN_1F31&amp;DEV_451B&amp;SUBSYS_451B1F31&amp;REV_01</div><svg style="left:485px;top:332px" width="16" height="14"><use href="#i-list"/></svg><div class="t" style="left:504.51px;top:331.5px;font-size:14px;line-height:16px;color:#000;font-weight:700;transform:scaleX(1.1126);transform-origin:0 0;text-decoration:underline;text-decoration-thickness:1px;text-underline-offset:2px;">PCI Express</div><svg style="left:483px;top:358px" width="20" height="10"><use href="#i-pcie"/></svg><div class="t k" style="left:504.99px;top:356px;font-size:14.6px;line-height:16px;color:#000;transform:scaleX(0.9874);transform-origin:0 0;">Version:</div><div class="t k" style="left:967.49px;top:356px;font-size:14.6px;line-height:16px;color:#000;transform:scaleX(1.0922);transform-origin:0 0;">4.0</div><svg style="left:483px;top:382px" width="20" height="10"><use href="#i-pcie"/></svg><div class="t k" style="left:504.99px;top:380px;font-size:14.6px;line-height:16px;color:#000;transform:scaleX(1.0035);transform-origin:0 0;">Maximum Link Width:</div><div class="t k" style="left:967.49px;top:380px;font-size:14.6px;line-height:16px;color:#000;transform:scaleX(1.1132);transform-origin:0 0;">x4</div><svg style="left:483px;top:406px" width="20" height="10"><use href="#i-pcie"/></svg><div class="t k" style="left:504.99px;top:404px;font-size:14.6px;line-height:16px;color:#000;transform:scaleX(0.9917);transform-origin:0 0;">Current Link Width:</div><div class="t k" style="left:967.49px;top:404px;font-size:14.6px;line-height:16px;color:#000;transform:scaleX(1.1132);transform-origin:0 0;">x4</div><svg style="left:483px;top:430px" width="20" height="10"><use href="#i-pcie"/></svg><div class="t k" style="left:504.99px;top:428px;font-size:14.6px;line-height:16px;color:#000;transform:scaleX(0.9908);transform-origin:0 0;">Maximum Link Speed:</div><div class="t k" style="left:967.49px;top:428px;font-size:14.6px;line-height:16px;color:#000;transform:scaleX(1.0638);transform-origin:0 0;">16.0 GT/s</div><svg style="left:483px;top:454px" width="20" height="10"><use href="#i-pcie"/></svg><div class="t k" style="left:504.99px;top:452px;font-size:14.6px;line-height:16px;color:#000;transform:scaleX(0.9781);transform-origin:0 0;">Current Link Speed:</div><div class="t k" style="left:967.49px;top:452px;font-size:14.6px;line-height:16px;color:#000;transform:scaleX(1.0638);transform-origin:0 0;">16.0 GT/s</div><svg style="left:483px;top:478px" width="20" height="10"><use href="#i-pcie"/></svg><div class="t k" style="left:504.99px;top:476px;font-size:14.6px;line-height:16px;color:#000;transform:scaleX(1.0335);transform-origin:0 0;">Device/Port Type:</div><div class="t k" style="left:967.49px;top:476px;font-size:14.6px;line-height:16px;color:#000;transform:scaleX(0.9817);transform-origin:0 0;">PCI Express Endpoint</div><svg style="left:484px;top:498px" width="18" height="18"><use href="#i-x"/></svg><div class="t k" style="left:504.99px;top:500px;font-size:14.6px;line-height:16px;color:#000;transform:scaleX(1.0216);transform-origin:0 0;">Slot Implemented:</div><div class="t k" style="left:967.49px;top:500px;font-size:14.6px;line-height:16px;color:#000;transform:scaleX(1.0274);transform-origin:0 0;">No</div><svg style="left:484px;top:522px" width="18" height="18"><use href="#i-x"/></svg><div class="t k" style="left:504.99px;top:524px;font-size:14.6px;line-height:16px;color:#000;transform:scaleX(0.984);transform-origin:0 0;">Emergency Power Reduction:</div><div class="t k" style="left:967.49px;top:524px;font-size:14.6px;line-height:16px;color:#000;transform:scaleX(1.0111);transform-origin:0 0;">Not Supported</div><svg style="left:483px;top:550px" width="20" height="10"><use href="#i-pcie"/></svg><div class="t k" style="left:504.99px;top:548px;font-size:14.6px;line-height:16px;color:#000;transform:scaleX(1.0008);transform-origin:0 0;">Active State Power Management (ASPM) Support:</div><div class="t k" style="left:967.49px;top:548px;font-size:14.6px;line-height:16px;color:#000;transform:scaleX(0.9343);transform-origin:0 0;">L1</div><svg style="left:483px;top:574px" width="20" height="10"><use href="#i-pcie"/></svg><div class="t k" style="left:504.99px;top:572px;font-size:14.6px;line-height:16px;color:#000;transform:scaleX(1.0026);transform-origin:0 0;">Active State Power Management (ASPM) Status:</div><div class="t k" style="left:967.49px;top:572px;font-size:14.6px;line-height:16px;color:#000;transform:scaleX(0.9537);transform-origin:0 0;">Disabled</div><svg style="left:483px;top:598px" width="20" height="10"><use href="#i-pcie"/></svg><div class="t k" style="left:504.99px;top:596px;font-size:14.6px;line-height:16px;color:#000;transform:scaleX(1.0011);transform-origin:0 0;">L0s Exit Latency:</div><div class="t k" style="left:967.49px;top:596px;font-size:14.6px;line-height:16px;color:#000;transform:scaleX(1.1124);transform-origin:0 0;">&gt;4 us</div><svg style="left:483px;top:622px" width="20" height="10"><use href="#i-pcie"/></svg><div class="t k" style="left:504.99px;top:620px;font-size:14.6px;line-height:16px;color:#000;transform:scaleX(1.0022);transform-origin:0 0;">L1 Exit Latency:</div><div class="t k" style="left:967.49px;top:620px;font-size:14.6px;line-height:16px;color:#000;transform:scaleX(1.0889);transform-origin:0 0;">&gt;64 us</div><svg style="left:483px;top:646px" width="20" height="10"><use href="#i-pcie"/></svg><div class="t k" style="left:504.99px;top:644px;font-size:14.6px;line-height:16px;color:#000;transform:scaleX(0.9878);transform-origin:0 0;">Maximum Payload Size Supported:</div><div class="t k" style="left:967.49px;top:644px;font-size:14.6px;line-height:16px;color:#000;transform:scaleX(1.0454);transform-origin:0 0;">512 bytes</div><svg style="left:483px;top:670px" width="20" height="10"><use href="#i-pcie"/></svg><div class="t k" style="left:504.99px;top:668px;font-size:14.6px;line-height:16px;color:#000;transform:scaleX(0.9842);transform-origin:0 0;">Maximum Payload Size:</div><div class="t k" style="left:967.49px;top:668px;font-size:14.6px;line-height:16px;color:#000;transform:scaleX(1.0454);transform-origin:0 0;">512 bytes</div><svg style="left:484px;top:690px" width="18" height="18"><use href="#i-x"/></svg><div class="t k" style="left:504.99px;top:692px;font-size:14.6px;line-height:16px;color:#000;transform:scaleX(0.9593);transform-origin:0 0;">Resizable BAR Support:</div><div class="t k" style="left:967.49px;top:692px;font-size:14.6px;line-height:16px;color:#000;transform:scaleX(1.0111);transform-origin:0 0;">Not Supported</div><svg style="left:485px;top:740px" width="16" height="14"><use href="#i-list"/></svg><div class="t" style="left:504.51px;top:739.5px;font-size:14px;line-height:16px;color:#000;font-weight:700;transform:scaleX(1.1015);transform-origin:0 0;text-decoration:underline;text-decoration-thickness:1px;text-underline-offset:2px;">System Resources</div><svg style="left:483px;top:761px" width="20" height="20"><use href="#i-gear"/></svg><div class="t k" style="left:504.99px;top:764px;font-size:14.6px;line-height:16px;color:#000;transform:scaleX(1.03);transform-origin:0 0;">Interrupt Line:</div><div class="t k" style="left:967.49px;top:764px;font-size:14.6px;line-height:16px;color:#000;transform:scaleX(1.0756);transform-origin:0 0;">N/A</div><svg style="left:483px;top:785px" width="20" height="20"><use href="#i-gear"/></svg><div class="t k" style="left:504.99px;top:788px;font-size:14.6px;line-height:16px;color:#000;transform:scaleX(1.0288);transform-origin:0 0;">Interrupt Pin:</div><div class="t k" style="left:967.49px;top:788px;font-size:14.6px;line-height:16px;color:#000;transform:scaleX(1.1461);transform-origin:0 0;">INTA#</div><svg style="left:483px;top:809px" width="20" height="20"><use href="#i-gear"/></svg><div class="t k" style="left:504.99px;top:812px;font-size:14.6px;line-height:16px;color:#000;transform:scaleX(1.0163);transform-origin:0 0;">Memory Base Address 0</div><div class="t k" style="left:967.49px;top:812px;font-size:14.6px;line-height:16px;color:#000;transform:scaleX(0.9708);transform-origin:0 0;">FC100000</div><svg style="left:485px;top:860px" width="16" height="14"><use href="#i-list"/></svg><div class="t" style="left:504.51px;top:859.5px;font-size:14px;line-height:16px;color:#000;font-weight:700;transform:scaleX(1.1518);transform-origin:0 0;text-decoration:underline;text-decoration-thickness:1px;text-underline-offset:2px;">Features</div><svg style="left:484px;top:882px" width="18" height="18"><use href="#i-ok"/></svg><div class="t k" style="left:504.99px;top:884px;font-size:14.6px;line-height:16px;color:#000;transform:scaleX(0.9951);transform-origin:0 0;">Bus Mastering:</div><div class="t k" style="left:967.49px;top:884px;font-size:14.6px;line-height:16px;color:#000;transform:scaleX(0.9553);transform-origin:0 0;">Enabled</div><svg style="left:484px;top:906px" width="18" height="18"><use href="#i-x"/></svg><div class="t k" style="left:504.99px;top:908px;font-size:14.6px;line-height:16px;color:#000;transform:scaleX(1.0021);transform-origin:0 0;">Running At 66 MHz:</div><div class="t k" style="left:967.49px;top:908px;font-size:14.6px;line-height:16px;color:#000;transform:scaleX(0.988);transform-origin:0 0;">Not Capable</div><svg style="left:484px;top:930px" width="18" height="18"><use href="#i-x"/></svg><div class="t k" style="left:504.99px;top:932px;font-size:14.6px;line-height:16px;color:#000;transform:scaleX(1.0052);transform-origin:0 0;">Fast Back-to-Back Transactions:</div><div class="t k" style="left:967.49px;top:932px;font-size:14.6px;line-height:16px;color:#000;transform:scaleX(0.988);transform-origin:0 0;">Not Capable</div><svg style="left:485px;top:980px" width="16" height="14"><use href="#i-list"/></svg><div class="t" style="left:504.51px;top:979.5px;font-size:14px;line-height:16px;color:#000;font-weight:700;transform:scaleX(1.1686);transform-origin:0 0;text-decoration:underline;text-decoration-thickness:1px;text-underline-offset:2px;">Driver Information</div><svg style="left:483px;top:1001px" width="20" height="20"><use href="#i-gear"/></svg><div class="t k" style="left:504.99px;top:1004px;font-size:14.6px;line-height:16px;color:#000;transform:scaleX(1.0162);transform-origin:0 0;">Driver Manufacturer:</div><div class="t k" style="left:967.49px;top:1003px;font-size:14.6px;line-height:16px;color:#000;transform:scaleX(0.8789);transform-origin:0 0;">標準 NVM Express コントローラー</div><svg style="left:483px;top:1025px" width="20" height="20"><use href="#i-gear"/></svg><div class="t k" style="left:504.99px;top:1028px;font-size:14.6px;line-height:16px;color:#000;transform:scaleX(0.9836);transform-origin:0 0;">Driver Description:</div><div class="t k" style="left:967.49px;top:1027px;font-size:14.6px;line-height:16px;color:#000;transform:scaleX(0.8789);transform-origin:0 0;">標準 NVM Express コントローラー</div><svg style="left:483px;top:1049px" width="20" height="20"><use href="#i-gear"/></svg><div style="left:0px;top:1054px;width:1655px;height:23px;background:#f0f0f0"></div><div class="t" style="left:2.04px;top:1057.6px;font-size:16px;line-height:17px;color:#101010;transform:scaleX(0.8391);transform-origin:0 0;">DESKTOP-8GLV31J</div><div class="t" style="left:128.74px;top:1057.6px;font-size:16px;line-height:17px;color:#101010;transform:scaleX(1.0755);transform-origin:0 0;">-&gt;</div><div class="t" style="left:148.84px;top:1057.6px;font-size:16px;line-height:17px;color:#101010;transform:scaleX(0.8623);transform-origin:0 0;">Bus</div><div class="t" style="left:176.44px;top:1057.6px;font-size:16px;line-height:17px;color:#101010;transform:scaleX(1.0414);transform-origin:0 0;">-&gt;</div><div class="t" style="left:196.14px;top:1057.6px;font-size:16px;line-height:17px;color:#101010;transform:scaleX(0.8523);transform-origin:0 0;">PCI Bus #0</div><div class="t" style="left:268.94px;top:1057.6px;font-size:16px;line-height:17px;color:#101010;transform:scaleX(1.0414);transform-origin:0 0;">-&gt;</div><div class="t" style="left:288.84px;top:1057.6px;font-size:16px;line-height:17px;color:#101010;transform:scaleX(0.8982);transform-origin:0 0;">AMD Raphael - PCIe GPP Bridge[8:0]</div><div class="t" style="left:535.34px;top:1057.6px;font-size:16px;line-height:17px;color:#101010;transform:scaleX(1.0483);transform-origin:0 0;">-&gt;</div><div class="t" style="left:554.84px;top:1057.6px;font-size:16px;line-height:17px;color:#101010;transform:scaleX(0.8631);transform-origin:0 0;">PCI Express x4 Bus #20</div><div class="t" style="left:708.14px;top:1057.6px;font-size:16px;line-height:17px;color:#101010;transform:scaleX(1.0755);transform-origin:0 0;">-&gt;</div><div class="t" style="left:727.94px;top:1057.6px;font-size:16px;line-height:17px;color:#101010;transform:scaleX(0.8916);transform-origin:0 0;">Vendor ID: 1F31, Device ID: 451B</div><svg style="left:1641px;top:1064px;" width="12" height="12" viewBox="0 0 12 12"><path d="M9 1h2v2h-2zM9 5h2v2h-2zM9 9h2v2h-2zM5 5h2v2h-2zM5 9h2v2h-2zM1 9h2v2h-2z" fill="#bdbdbd"/></svg></div><div style="left:23px;top:475px;width:460px;height:589.5px;border-radius:8px;overflow:hidden;background:#f0f0f0;box-shadow:0 0 0 1px rgba(110,110,110,.55),0 12px 30px rgba(0,0,0,.26),0 0 12px rgba(0,0,0,.12);"><div style="left:-1px;top:-1px;width:462px;height:37.5px;background:#f3f3f3"></div><svg style="left:9px;top:7.6px;" width="20" height="20.5" viewBox="0 0 40 41"><path d="M.8 1.5 Q2 10 8.5 13.5" stroke="#2a2d3a" stroke-width="1.8" fill="none"/><path d="M30 9 Q40.5 8 38.6 18 Q37.5 23 31.5 26.5" stroke="#2a2d3a" stroke-width="2.2" fill="none"/><rect x="8.2" y="1.5" width="22.3" height="38.7" rx="5" ry="3.5" fill="url(#gBat2)"/><ellipse cx="19.4" cy="5.6" rx="9.6" ry="3.6" fill="#eef6f4"/><ellipse cx="19.4" cy="4" rx="5" ry="1.8" fill="#b9d4e6"/><path d="M11.5 26 L22.5 20.2 L33 21.5 L33.5 27 L25 33.6 L21.5 32.6 Z" fill="#333"/><path d="M11.5 26 L22.5 20.2 L33 21.5 L23 27.3 Z" fill="#565656"/><path d="M17 27.8 L5 33 M22 30.4 L10.8 36.2" stroke="#dc9c5e" stroke-width="2.1" stroke-linecap="round"/><path d="M17 27.2 L6 32" stroke="#f2cfa0" stroke-width=".7"/></svg><div class="t" style="left:34.48px;top:9.3px;font-size:15px;line-height:17px;color:#8a8a8a;transform:scaleX(0.801);transform-origin:0 0;">電源オプション</div><div class="t" style="left:369.5px;top:10px;font-size:15px;line-height:17px;color:#8a8a8a;">?</div><svg style="left:424px;top:12px;" width="13" height="13" viewBox="0 0 13 13"><path d="M.8 .8 L12.2 12.2 M12.2 .8 L.8 12.2" stroke="#777" stroke-width="1.1"/></svg><div style="left:9px;top:74px;width:440.2px;height:459px;background:#fafafa;border:1px solid #e6e6e6"></div><div style="left:9px;top:47.5px;width:74.2px;height:27.5px;background:#fafafa;border:1px solid #e6e6e6;border-bottom:none;border-radius:3px 3px 0 0"></div><div class="t" style="left:16.18px;top:51.2px;font-size:15px;line-height:17px;color:#000;transform:scaleX(0.9967);transform-origin:0 0;">詳細設定</div><svg style="left:28.7px;top:100.5px;" width="40" height="41" viewBox="0 0 40 41"><path d="M.8 1.5 Q2 10 8.5 13.5" stroke="#2a2d3a" stroke-width="1.8" fill="none"/><path d="M30 9 Q40.5 8 38.6 18 Q37.5 23 31.5 26.5" stroke="#2a2d3a" stroke-width="2.2" fill="none"/><rect x="8.2" y="1.5" width="22.3" height="38.7" rx="5" ry="3.5" fill="url(#gBat2)"/><ellipse cx="19.4" cy="5.6" rx="9.6" ry="3.6" fill="#eef6f4"/><ellipse cx="19.4" cy="4" rx="5" ry="1.8" fill="#b9d4e6"/><path d="M11.5 26 L22.5 20.2 L33 21.5 L33.5 27 L25 33.6 L21.5 32.6 Z" fill="#333"/><path d="M11.5 26 L22.5 20.2 L33 21.5 L23 27.3 Z" fill="#565656"/><path d="M17 27.8 L5 33 M22 30.4 L10.8 36.2" stroke="#dc9c5e" stroke-width="2.1" stroke-linecap="round"/><path d="M17 27.2 L6 32" stroke="#f2cfa0" stroke-width=".7"/></svg><div class="t" style="left:81.47px;top:98px;font-size:15px;line-height:17px;color:#000;transform:scaleX(0.7809);transform-origin:0 0;">カスタマイズする電源プランを選択してから、お使いのコンピュ</div><div class="t" style="left:81.47px;top:117.2px;font-size:15px;line-height:17px;color:#000;transform:scaleX(0.8116);transform-origin:0 0;">ーターで電源を管理する方法を選択してください。</div><div style="left:28px;top:191px;width:270px;height:28px;background:#fff;border:1px solid #cfcfcf;border-bottom-color:#8f8f8f;border-radius:3px"></div><div class="t" style="left:31.77px;top:195.5px;font-size:15px;line-height:17px;color:#000;transform:scaleX(0.7559);transform-origin:0 0;">バランス [アクティブ]</div><svg style="left:281.5px;top:201.5px;" width="11" height="7" viewBox="0 0 11 7"><path d="M.8 .8 L5.5 5.6 L10.2 .8" stroke="#444" stroke-width="1.1" fill="none"/></svg><div style="left:28px;top:229px;width:401.5px;height:257px;background:#fff;border:1px solid #828790"></div><div style="left:408px;top:230px;width:20.5px;height:255px;background:#f0f0f0"></div><div style="left:414.6px;top:252px;width:6.5px;height:167px;background:#868686"></div><div style="left:51.8px;top:231.3px;width:84px;height:21.5px;background:#ededed"></div><div style="left:29px;top:230px;width:379px;height:255px;overflow:hidden"><svg style="left:8px;top:8px;" width="11" height="11" viewBox="0 0 11 11"><rect x=".5" y=".5" width="10" height="10" rx="1.5" fill="#fcfcfc" stroke="#949494"/><rect x="1.5" y="6" width="8" height="3.5" fill="#eee"/><path d="M2.8 5.5 H8.2" stroke="#4a5a96" stroke-width="1.1"/><path d="M5.5 2.8 V8.2" stroke="#4a5a96" stroke-width="1.1"/></svg><div class="t" style="left:24.97px;top:3.2px;font-size:15px;line-height:17px;color:#000;transform:scaleX(0.7365);transform-origin:0 0;">ハード ディスク</div><svg style="left:8px;top:30px;" width="11" height="11" viewBox="0 0 11 11"><rect x=".5" y=".5" width="10" height="10" rx="1.5" fill="#fcfcfc" stroke="#949494"/><rect x="1.5" y="6" width="8" height="3.5" fill="#eee"/><path d="M2.8 5.5 H8.2" stroke="#4a5a96" stroke-width="1.1"/><path d="M5.5 2.8 V8.2" stroke="#4a5a96" stroke-width="1.1"/></svg><div class="t" style="left:24.97px;top:26.2px;font-size:15px;line-height:17px;color:#000;transform:scaleX(0.9974);transform-origin:0 0;">Internet Explorer</div><svg style="left:8px;top:52px;" width="11" height="11" viewBox="0 0 11 11"><rect x=".5" y=".5" width="10" height="10" rx="1.5" fill="#fcfcfc" stroke="#949494"/><rect x="1.5" y="6" width="8" height="3.5" fill="#eee"/><path d="M2.8 5.5 H8.2" stroke="#4a5a96" stroke-width="1.1"/><path d="M5.5 2.8 V8.2" stroke="#4a5a96" stroke-width="1.1"/></svg><div class="t" style="left:24.97px;top:47.2px;font-size:15px;line-height:17px;color:#000;transform:scaleX(0.8278);transform-origin:0 0;">デスクトップの背景の設定</div><svg style="left:8px;top:74px;" width="11" height="11" viewBox="0 0 11 11"><rect x=".5" y=".5" width="10" height="10" rx="1.5" fill="#fcfcfc" stroke="#949494"/><rect x="1.5" y="6" width="8" height="3.5" fill="#eee"/><path d="M2.8 5.5 H8.2" stroke="#4a5a96" stroke-width="1.1"/><path d="M5.5 2.8 V8.2" stroke="#4a5a96" stroke-width="1.1"/></svg><div class="t" style="left:24.97px;top:69.2px;font-size:15px;line-height:17px;color:#000;transform:scaleX(0.7868);transform-origin:0 0;">ワイヤレス アダプターの設定</div><svg style="left:8px;top:96px;" width="11" height="11" viewBox="0 0 11 11"><rect x=".5" y=".5" width="10" height="10" rx="1.5" fill="#fcfcfc" stroke="#949494"/><rect x="1.5" y="6" width="8" height="3.5" fill="#eee"/><path d="M2.8 5.5 H8.2" stroke="#4a5a96" stroke-width="1.1"/><path d="M5.5 2.8 V8.2" stroke="#4a5a96" stroke-width="1.1"/></svg><div class="t" style="left:24.97px;top:91.2px;font-size:15px;line-height:17px;color:#000;transform:scaleX(0.725);transform-origin:0 0;">スリープ</div><svg style="left:8px;top:118px;" width="11" height="11" viewBox="0 0 11 11"><rect x=".5" y=".5" width="10" height="10" rx="1.5" fill="#fcfcfc" stroke="#949494"/><rect x="1.5" y="6" width="8" height="3.5" fill="#eee"/><path d="M2.8 5.5 H8.2" stroke="#4a5a96" stroke-width="1.1"/><path d="M5.5 2.8 V8.2" stroke="#4a5a96" stroke-width="1.1"/></svg><div class="t" style="left:24.97px;top:113.2px;font-size:15px;line-height:17px;color:#000;transform:scaleX(0.9321);transform-origin:0 0;">USB 設定</div><svg style="left:8px;top:140px;" width="11" height="11" viewBox="0 0 11 11"><rect x=".5" y=".5" width="10" height="10" rx="1.5" fill="#fcfcfc" stroke="#949494"/><rect x="1.5" y="6" width="8" height="3.5" fill="#eee"/><path d="M2.8 5.5 H8.2" stroke="#4a5a96" stroke-width="1.1"/></svg><div class="t" style="left:24.97px;top:136.2px;font-size:15px;line-height:17px;color:#000;transform:scaleX(0.8937);transform-origin:0 0;">PCI Express</div><svg style="left:27px;top:162px;" width="11" height="11" viewBox="0 0 11 11"><rect x=".5" y=".5" width="10" height="10" rx="1.5" fill="#fcfcfc" stroke="#949494"/><rect x="1.5" y="6" width="8" height="3.5" fill="#eee"/><path d="M2.8 5.5 H8.2" stroke="#4a5a96" stroke-width="1.1"/></svg><div class="t" style="left:42.67px;top:157.2px;font-size:15px;line-height:17px;color:#000;transform:scaleX(0.9107);transform-origin:0 0;">リンク状態の電源管理</div><div class="t" style="left:63.47px;top:179.2px;font-size:15px;line-height:17px;color:#000;transform:scaleX(0.9657);transform-origin:0 0;">設定:</div><div class="t" style="left:102.07px;top:179.2px;font-size:15px;line-height:17px;color:#0a66cc;transform:scaleX(0.9733);transform-origin:0 0;">適切な省電力</div><svg style="left:8px;top:206px;" width="11" height="11" viewBox="0 0 11 11"><rect x=".5" y=".5" width="10" height="10" rx="1.5" fill="#fcfcfc" stroke="#949494"/><rect x="1.5" y="6" width="8" height="3.5" fill="#eee"/><path d="M2.8 5.5 H8.2" stroke="#4a5a96" stroke-width="1.1"/><path d="M5.5 2.8 V8.2" stroke="#4a5a96" stroke-width="1.1"/></svg><div class="t" style="left:24.97px;top:201.2px;font-size:15px;line-height:17px;color:#000;transform:scaleX(0.8473);transform-origin:0 0;">プロセッサの電源管理</div><svg style="left:8px;top:228px;" width="11" height="11" viewBox="0 0 11 11"><rect x=".5" y=".5" width="10" height="10" rx="1.5" fill="#fcfcfc" stroke="#949494"/><rect x="1.5" y="6" width="8" height="3.5" fill="#eee"/><path d="M2.8 5.5 H8.2" stroke="#4a5a96" stroke-width="1.1"/><path d="M5.5 2.8 V8.2" stroke="#4a5a96" stroke-width="1.1"/></svg><div class="t" style="left:24.97px;top:223.2px;font-size:15px;line-height:17px;color:#000;transform:scaleX(0.7067);transform-origin:0 0;">ディスプレイ</div><svg style="left:8px;top:250px;" width="11" height="11" viewBox="0 0 11 11"><rect x=".5" y=".5" width="10" height="10" rx="1.5" fill="#fcfcfc" stroke="#949494"/><rect x="1.5" y="6" width="8" height="3.5" fill="#eee"/><path d="M2.8 5.5 H8.2" stroke="#4a5a96" stroke-width="1.1"/><path d="M5.5 2.8 V8.2" stroke="#4a5a96" stroke-width="1.1"/></svg><div class="t" style="left:24.97px;top:245.2px;font-size:15px;line-height:17px;color:#000;transform:scaleX(0.7927);transform-origin:0 0;">マルチメディアの設定</div></div><div style="left:233.4px;top:495.4px;width:197.2px;height:27.3px;background:#fdfdfd;border:1px solid #d2d2d2;border-bottom-color:#bdbdbd;border-radius:4px"></div><div class="t" style="left:264.18px;top:500.2px;font-size:15px;line-height:17px;color:#000;transform:scaleX(0.8651);transform-origin:0 0;">既定のプランの復元(R)</div><div style="left:137.5px;top:546.5px;width:97px;height:32px;background:#fdfdfd;border:1px solid #d2d2d2;border-bottom-color:#bdbdbd;border-radius:4px"></div><div class="t" style="left:175.16px;top:553.8px;font-size:15px;line-height:17px;color:#000;">OK</div><div style="left:245.4px;top:546.5px;width:97.2px;height:32px;background:#fdfdfd;border:1px solid #d2d2d2;border-bottom-color:#bdbdbd;border-radius:4px"></div><div class="t" style="left:265.68px;top:552.8px;font-size:15px;line-height:17px;color:#000;transform:scaleX(0.7533);transform-origin:0 0;">キャンセル</div><div style="left:353.3px;top:546.5px;width:97px;height:32px;background:#f5f5f5;border:1px solid #e4e4e4;border-radius:4px"></div><div class="t" style="left:377.08px;top:552.8px;font-size:15px;line-height:17px;color:#9d9d9d;transform:scaleX(0.988);transform-origin:0 0;">適用(A)</div></div><div style="left:1200px;top:369px;width:520px;height:703.5px;border-radius:8px;overflow:hidden;background:#f0f0f0;box-shadow:0 0 0 1px rgba(120,130,140,.6),0 12px 30px rgba(0,0,0,.30),0 0 12px rgba(0,0,0,.14);"><div style="left:-1px;top:-1px;width:521px;height:39px;background:#f3f3f3"></div><div style="left:-1px;top:38px;width:521px;height:1px;background:#d6e3f0"></div><svg style="left:10px;top:8px;" width="20" height="20" viewBox="0 0 20 20"><rect x=".5" y=".5" width="19" height="19" fill="#eef5fc" stroke="#b9d7f3"/><circle cx="10" cy="10" r="8" fill="#fff" stroke="#3a3a3a" stroke-width="1.4"/><path d="M9.2 12.2 L14 6.4" stroke="#3a3a3a" stroke-width="1.6"/><path d="M6 14.2 H14" stroke="#3a3a3a" stroke-width="1.6"/><path d="M4 9.5h1M15 9.5h1M10 3.6v1" stroke="#666" stroke-width=".8"/></svg><div class="t" style="left:35.67px;top:10.2px;font-size:15px;line-height:17px;color:#8a8a8a;transform:scaleX(0.9448);transform-origin:0 0;">GPU Power Tester</div><div style="left:16.8px;top:55px;width:108px;height:103.4px;background:#fdfdfd;border:1px solid #d0d0d0;border-bottom-color:#bdbdbd;border-radius:4px"></div><div class="t" style="left:38.94px;top:96.8px;font-size:16px;line-height:17px;color:#000;transform:scaleX(0.9263);transform-origin:0 0;">測定開始</div><div style="left:134px;top:61px;width:134.8px;height:97.6px;border:1px solid #dcdcdc"></div><div style="left:141px;top:59px;width:50px;height:5px;background:#f0f0f0"></div><div class="t" style="left:143.47px;top:51.8px;font-size:15px;line-height:17px;color:#000;transform:scaleX(0.9623);transform-origin:0 0;">TOTAL</div><div style="left:276.2px;top:61px;width:134.6px;height:97.6px;border:1px solid #dcdcdc"></div><div style="left:283.7px;top:59px;width:65.6px;height:5px;background:#f0f0f0"></div><div class="t" style="left:286.17px;top:51.8px;font-size:15px;line-height:17px;color:#000;transform:scaleX(0.9349);transform-origin:0 0;">AUX CH1</div><div style="left:418.8px;top:61px;width:134.2px;height:97.6px;border:1px solid #dcdcdc"></div><div style="left:426.4px;top:59px;width:65.6px;height:5px;background:#f0f0f0"></div><div class="t" style="left:428.88px;top:51.8px;font-size:15px;line-height:17px;color:#000;transform:scaleX(0.9349);transform-origin:0 0;">AUX CH2</div><div class="t" style="left:193.45px;top:72.5px;font-size:30px;line-height:33px;color:#000;transform:scaleX(0.9267);transform-origin:0 0;">1.3W</div><div class="t" style="left:146.27px;top:106px;font-size:15px;line-height:17px;color:#e0193f;transform:scaleX(0.8593);transform-origin:0 0;">PEEK</div><div class="t" style="left:193.45px;top:121px;font-size:30px;line-height:33px;color:#e0193f;transform:scaleX(0.9267);transform-origin:0 0;">1.7W</div><div class="t" style="left:335.45px;top:72.5px;font-size:30px;line-height:33px;color:#000;transform:scaleX(0.9553);transform-origin:0 0;">0.0W</div><div class="t" style="left:359.6px;top:105.6px;font-size:20px;line-height:22px;color:#000;transform:scaleX(1.0278);transform-origin:0 0;">0.0V</div><div class="t" style="left:359.6px;top:130.7px;font-size:20px;line-height:22px;color:#000;transform:scaleX(1.0278);transform-origin:0 0;">0.0A</div><div class="t" style="left:478.45px;top:72.5px;font-size:30px;line-height:33px;color:#000;transform:scaleX(0.9553);transform-origin:0 0;">0.0W</div><div style="left:15.5px;top:167.5px;width:504.5px;height:521px;background:#404040"></div><svg style="left:0px;top:0px;" width="520" height="703.5" viewBox="0 0 520 703.5"><path d="M112 209.3 H520" stroke="#c4c4c4" stroke-width="1" stroke-dasharray="2.6 1.6" fill="none"/><path d="M112 292.1 H520" stroke="#c4c4c4" stroke-width="1" stroke-dasharray="2.6 1.6" fill="none"/><path d="M112 374.9 H520" stroke="#c4c4c4" stroke-width="1" stroke-dasharray="2.6 1.6" fill="none"/><path d="M112 457.7 H520" stroke="#c4c4c4" stroke-width="1" stroke-dasharray="2.6 1.6" fill="none"/><path d="M112 540.5 H520" stroke="#c4c4c4" stroke-width="1" stroke-dasharray="2.6 1.6" fill="none"/><path d="M193 209.3 V623" stroke="#c4c4c4" stroke-width="1" stroke-dasharray="2.6 1.6" fill="none"/><path d="M273.5 209.3 V623" stroke="#c4c4c4" stroke-width="1" stroke-dasharray="2.6 1.6" fill="none"/><path d="M354 209.3 V623" stroke="#c4c4c4" stroke-width="1" stroke-dasharray="2.6 1.6" fill="none"/><path d="M434.5 209.3 V623" stroke="#c4c4c4" stroke-width="1" stroke-dasharray="2.6 1.6" fill="none"/><path d="M515 209.3 V623" stroke="#c4c4c4" stroke-width="1" stroke-dasharray="2.6 1.6" fill="none"/><path d="M101 209.3 H112" stroke="#ececec" stroke-width="1.4"/><path d="M101 292.1 H112" stroke="#ececec" stroke-width="1.4"/><path d="M101 374.9 H112" stroke="#ececec" stroke-width="1.4"/><path d="M101 457.7 H112" stroke="#ececec" stroke-width="1.4"/><path d="M101 540.5 H112" stroke="#ececec" stroke-width="1.4"/><path d="M101 623.3 H112" stroke="#ececec" stroke-width="1.4"/><path d="M111.90000000000009 209 V630" stroke="#ececec" stroke-width="1.4"/><path d="M111 623.3 H520" stroke="#ececec" stroke-width="1.4"/><path d="M354 623.3 V629.5" stroke="#ececec" stroke-width="1.4"/></svg><div class="t" style="left:79.58px;top:200.3px;font-size:17px;line-height:19px;color:#ececec;">10</div><div class="t" style="left:89.03px;top:283.1px;font-size:17px;line-height:19px;color:#ececec;">8</div><div class="t" style="left:89.03px;top:365.9px;font-size:17px;line-height:19px;color:#ececec;">6</div><div class="t" style="left:89.03px;top:448.7px;font-size:17px;line-height:19px;color:#ececec;">4</div><div class="t" style="left:89.03px;top:531.5px;font-size:17px;line-height:19px;color:#ececec;">2</div><div class="t" style="left:89.03px;top:614.3px;font-size:17px;line-height:19px;color:#ececec;">0</div><div class="t" style="left:343.9px;top:629.6px;font-size:17px;line-height:19px;color:#ececec;transform:scaleX(0.891);transform-origin:0 0;">15</div><div style="left:46.4px;top:415.4px;width:0;height:0"><div class="t" style="position:absolute;left:-40px;top:-8px;width:80px;text-align:center;font-size:14px;line-height:16px;color:#e4e4e4;transform:rotate(-90deg) scaleX(.98)">Power [W]</div></div></div></body></html>
